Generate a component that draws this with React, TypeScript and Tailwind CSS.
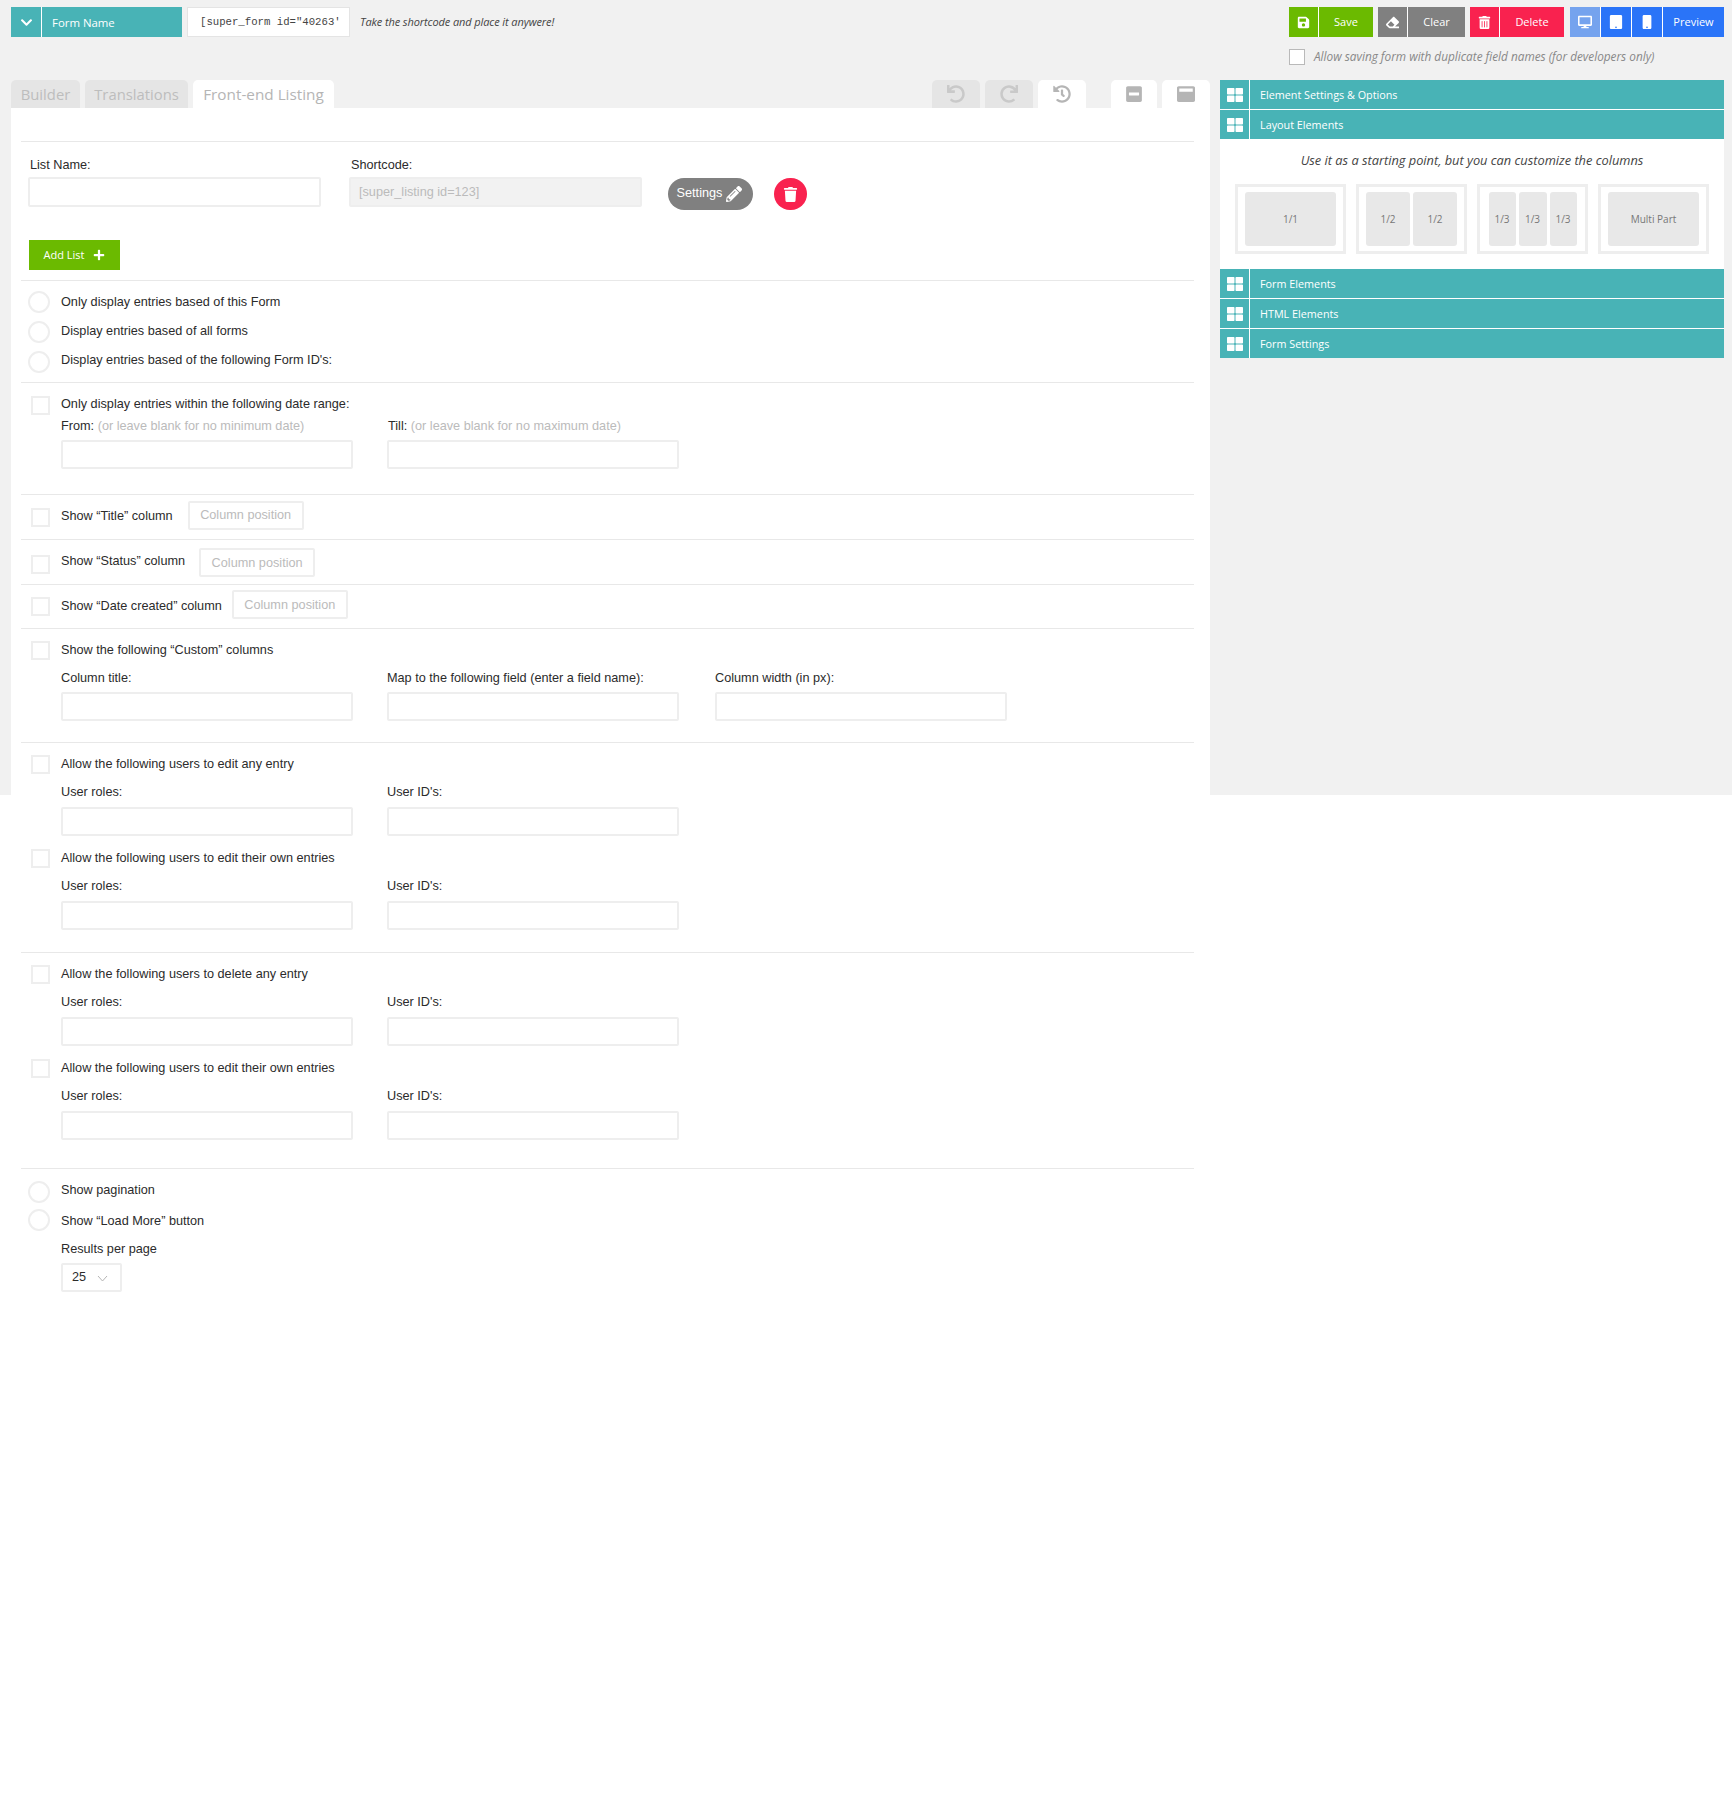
import { ReactNode } from "react";
import {
  FaChevronDown,
  FaDesktop,
  FaEraser,
  FaHistory,
  FaMinusSquare,
  FaMobile,
  FaPencilAlt,
  FaPlus,
  FaRedo,
  FaSave,
  FaTablet,
  FaThLarge,
  FaTrash,
  FaTrashAlt,
  FaUndo,
  FaWindowMaximize,
} from "react-icons/fa";

const uiFont = "font-['Open_Sans',sans-serif]";

function ActionButton({
  icon,
  label,
  color,
  labelWidth,
}: {
  icon: ReactNode;
  label: string;
  color: string;
  labelWidth: string;
}) {
  return (
    <div className={`flex h-[30px] text-white ${color}`}>
      <div className="flex w-[30px] items-center justify-center border-r border-white text-[13px]">{icon}</div>
      <div className={`flex items-center justify-center pt-[1px] text-[11px] ${labelWidth}`}>{label}</div>
    </div>
  );
}

function TopBar() {
  return (
    <header className={`flex h-[80px] justify-between pl-[11px] pr-[8px] pt-[7px] ${uiFont}`}>
      <div className="flex h-[30px] items-center">
        <div className="flex h-full w-[31px] items-center justify-center border-r border-white bg-[#48b3b6] text-[13px] text-white">
          <FaChevronDown />
        </div>
        <div className="flex h-full w-[140px] items-center bg-[#48b3b6] pl-[10px] pt-[1px] text-[11.4px] text-white">Form Name</div>
        <div className="ml-[5px] flex h-full w-[163px] items-center overflow-hidden whitespace-nowrap border border-[#e4e4e4] bg-white pl-[12px] pr-[9px] font-['Liberation_Mono',monospace] text-[10.67px] text-[#444]">
          <span className="block w-full overflow-hidden">[super_form id="40263'</span>
        </div>
        <span className="ml-[10px] pt-[1px] text-[11px] italic tracking-[-0.1px] text-[#444]">Take the shortcode and place it anywere!</span>
      </div>
      <div>
        <div className="flex">
          <ActionButton icon={<FaSave />} label="Save" color="bg-[#6bba00]" labelWidth="w-[54px]" />
          <div className="ml-[5px]">
            <ActionButton icon={<FaEraser />} label="Clear" color="bg-[#808080]" labelWidth="w-[57px]" />
          </div>
          <div className="ml-[5px]">
            <ActionButton icon={<FaTrashAlt />} label="Delete" color="bg-[#f9224f]" labelWidth="w-[64px]" />
          </div>
          <div className="ml-[6px] flex h-[30px] text-white">
            <div className="flex w-[31px] items-center justify-center border-r border-white bg-[#75a3ee] text-[14px]">
              <FaDesktop />
            </div>
            <div className="flex w-[31px] items-center justify-center border-r border-white bg-[#2a74f8] text-[14px]">
              <FaTablet />
            </div>
            <div className="flex w-[31px] items-center justify-center border-r border-white bg-[#2a74f8] text-[14px]">
              <FaMobile />
            </div>
            <div className="flex w-[61px] items-center justify-center bg-[#2a74f8] pt-[1px] text-[11px]">Preview</div>
          </div>
        </div>
        <div className="mt-[11px] flex items-center">
          <div className="h-[16px] w-[16px] border border-[#b9b9b9] bg-white" />
          <span className="ml-[9px] text-[11.8px] italic text-[#888]">Allow saving form with duplicate field names (for developers only)</span>
        </div>
      </div>
    </header>
  );
}

function Tab({ label, active, className }: { label: string; active?: boolean; className: string }) {
  return (
    <div
      className={`flex h-[28px] items-center justify-center rounded-t-[5px] pt-[1px] ${uiFont} ${
        active ? "bg-white text-[15.3px] text-[#b5b5b5]" : "bg-[#e5e5e5] text-[14.8px] text-[#bdbdbd]"
      } ${className}`}
    >
      {label}
    </div>
  );
}

function ToolTab({ icon, active, className }: { icon: ReactNode; active?: boolean; className: string }) {
  return (
    <div
      className={`flex h-[28px] items-center justify-center rounded-t-[5px] text-[18px] ${
        active ? "bg-white text-[#b5b5b5]" : "bg-[#e5e5e5] text-[#c9c9c9]"
      } ${className}`}
    >
      {icon}
    </div>
  );
}

function TabBar() {
  return (
    <div className="flex h-[28px]">
      <Tab label="Builder" className="w-[69px]" />
      <Tab label="Translations" className="ml-[5px] w-[103px]" />
      <Tab label="Front-end Listing" active className="ml-[5px] w-[141px]" />
      <ToolTab icon={<FaUndo />} className="ml-auto w-[48px]" />
      <ToolTab icon={<FaRedo />} className="ml-[5px] w-[48px]" />
      <ToolTab icon={<FaHistory />} active className="ml-[5px] w-[48px]" />
      <ToolTab icon={<FaMinusSquare />} active className="ml-[25px] w-[46px]" />
      <ToolTab icon={<FaWindowMaximize />} active className="ml-[5px] w-[48px]" />
    </div>
  );
}

function TextInput({ className = "", disabled, placeholder }: { className?: string; disabled?: boolean; placeholder?: string }) {
  return (
    <div
      className={`flex h-[29px] w-[292px] shrink-0 items-center rounded-[2px] border-2 border-[#eeeeee] px-[7px] pt-[1px] text-[#bbbbbb] ${
        disabled ? "bg-[#f2f2f2]" : "bg-white"
      } ${className}`}
    >
      {placeholder}
    </div>
  );
}

function Radio({ label, className = "", labelClass = "" }: { label: string; className?: string; labelClass?: string }) {
  return (
    <div className={`flex items-center pl-[7px] ${className}`}>
      <div className="h-[22px] w-[22px] rounded-full border-2 border-[#eeeeee] bg-white" />
      <span className={`ml-[11px] leading-[16px] ${labelClass}`}>{label}</span>
    </div>
  );
}

function Check({
  children,
  className = "",
  labelClass = "mb-[1px]",
}: {
  children: ReactNode;
  className?: string;
  labelClass?: string;
}) {
  return (
    <div className={`flex items-center pl-[10px] ${className}`}>
      <div className="h-[19px] w-[19px] border-2 border-[#eeeeee] bg-white" />
      <span className={`ml-[11px] leading-[16px] ${labelClass}`}>{children}</span>
    </div>
  );
}

function ColumnRow({
  label,
  sectionClass,
  boxClass,
  labelClass = "",
}: {
  label: string;
  sectionClass: string;
  boxClass: string;
  labelClass?: string;
}) {
  return (
    <section className={`border-b border-[#e8e8e8] ${sectionClass}`}>
      <div className="flex h-[29px] items-center pl-[10px]">
        <div className="mt-[4px] h-[19px] w-[19px] border-2 border-[#eeeeee] bg-white" />
        <span className={`ml-[11px] leading-[16px] ${labelClass}`}>{label}</span>
        <div className={`flex h-[29px] w-[116px] items-center justify-center rounded-[2px] border-2 border-[#eeeeee] text-[#bbbbbb] ${boxClass}`}>
          Column position
        </div>
      </div>
    </section>
  );
}

function UserFields() {
  return (
    <div className="mt-[10px] flex gap-[34px] pl-[40px]">
      <div>
        <div className="h-[16px] leading-[16px]">User roles:</div>
        <TextInput className="mt-[7px]" />
      </div>
      <div>
        <div className="h-[16px] leading-[16px]">User ID's:</div>
        <TextInput className="mt-[7px]" />
      </div>
    </div>
  );
}

function ListingForm() {
  return (
    <main className="ml-[10px] mr-[16px] bg-white font-['Liberation_Sans',Arial,sans-serif] text-[12.7px] text-[#2b2b2b]">
      <div className="h-[34px] border-b border-[#e8e8e8]" />

      <section className="h-[139px] border-b border-[#e8e8e8] pl-[7px] pt-[15px]">
        <div className="flex items-start">
          <div className="w-[293px]">
            <div className="h-[16px] pl-[2px] leading-[16px]">List Name:</div>
            <TextInput className="mt-[4px] h-[30px] w-[293px]" />
          </div>
          <div className="ml-[28px] w-[293px]">
            <div className="h-[16px] pl-[2px] leading-[16px]">Shortcode:</div>
            <TextInput disabled placeholder="[super_listing id=123]" className="mt-[4px] h-[30px] w-[293px] pl-[8px]" />
          </div>
          <div className="ml-[26px] mt-[21px] flex h-[32px] w-[85px] items-center justify-center gap-[4px] rounded-full bg-[#808080] text-white">
            <span className="-ml-[2px]">Settings</span>
            <FaPencilAlt className="text-[16px]" />
          </div>
          <div className="ml-[21px] mt-[21px] flex h-[32px] w-[33px] items-center justify-center rounded-full bg-[#f9224f] text-[15px] text-white">
            <FaTrash />
          </div>
        </div>
        <div className={`ml-[1px] mt-[30px] flex h-[30px] w-[91px] items-center justify-center gap-[9px] bg-[#6bba00] text-[11px] text-white ${uiFont}`}>
          <span>Add List</span>
          <FaPlus className="text-[12px]" />
        </div>
      </section>

      <section className="h-[102px] border-b border-[#e8e8e8] pt-[10px]">
        <Radio label="Only display entries based of this Form" />
        <Radio label="Display entries based of all forms" className="mt-[8px]" labelClass="mb-[2px]" />
        <Radio label="Display entries based of the following Form ID's:" className="mt-[8px]" labelClass="mb-[4px]" />
      </section>

      <section className="h-[112px] border-b border-[#e8e8e8] pt-[13px]">
        <Check labelClass="mb-[3px]">Only display entries within the following date range:</Check>
        <div className="mt-[3px] flex gap-[34px] pl-[40px]">
          <div>
            <div className="h-[16px] leading-[16px]">
              From: <span className="text-[#bbbbbb]">(or leave blank for no minimum date)</span>
            </div>
            <TextInput className="mt-[6px]" />
          </div>
          <div>
            <div className="h-[16px] pl-[1px] leading-[16px]">
              Till: <span className="text-[#bbbbbb]">(or leave blank for no maximum date)</span>
            </div>
            <TextInput className="mt-[6px]" />
          </div>
        </div>
      </section>

      <ColumnRow label="Show “Title” column" sectionClass="h-[45px] pt-[6px]" boxClass="ml-[15px] pt-[1px]" />
      <ColumnRow label="Show “Status” column" sectionClass="h-[45px] pt-[8px]" boxClass="ml-[14px] pt-[2px]" labelClass="mb-[3px]" />
      <ColumnRow label="Show “Date created” column" sectionClass="h-[44px] pt-[5px]" boxClass="ml-[10px] pt-[3px]" labelClass="mt-[3px]" />

      <section className="h-[114px] border-b border-[#e8e8e8] pt-[12px]">
        <Check>Show the following “Custom” columns</Check>
        <div className="mt-[10px] flex gap-[34px] pl-[40px]">
          <div>
            <div className="h-[16px] leading-[16px]">Column title:</div>
            <TextInput className="mt-[6px]" />
          </div>
          <div>
            <div className="h-[16px] leading-[16px]">Map to the following field (enter a field name):</div>
            <TextInput className="mt-[6px]" />
          </div>
          <div className="ml-[2px]">
            <div className="h-[16px] leading-[16px]">Column width (in px):</div>
            <TextInput className="mt-[6px]" />
          </div>
        </div>
      </section>

      <section className="h-[210px] border-b border-[#e8e8e8] pt-[12px]">
        <Check>Allow the following users to edit any entry</Check>
        <UserFields />
        <Check className="mt-[13px]">Allow the following users to edit their own entries</Check>
        <UserFields />
      </section>

      <section className="h-[216px] border-b border-[#e8e8e8] pt-[12px]">
        <Check>Allow the following users to delete any entry</Check>
        <UserFields />
        <Check className="mt-[13px]">Allow the following users to edit their own entries</Check>
        <UserFields />
      </section>

      <section className="pt-[12px]">
        <Radio label="Show pagination" labelClass="mb-[4px]" />
        <Radio label="Show “Load More” button" className="mt-[6px]" labelClass="mt-[2px]" />
        <div className="pl-[40px]">
          <div className="mt-[10px] h-[16px] leading-[16px]">Results per page</div>
          <div className="mt-[6px] flex h-[29px] w-[61px] items-center rounded-[2px] border-2 border-[#eeeeee] pl-[9px] pt-[1px]">
            25
            <svg className="ml-[11px]" width="11" height="7" viewBox="0 0 11 7" fill="none" stroke="#b5b5b5" strokeWidth="1">
              <path d="M1 1l4.5 5L10 1" />
            </svg>
          </div>
        </div>
      </section>
    </main>
  );
}

function PanelHeader({ label }: { label: string }) {
  return (
    <div className={`flex h-[30px] border-b border-white bg-[#48b3b6] text-[10.8px] text-white ${uiFont}`}>
      <div className="flex w-[30px] items-center justify-center border-r border-white text-[16px]">
        <FaThLarge />
      </div>
      <div className="flex items-center pl-[10px] pt-[1px]">{label}</div>
    </div>
  );
}

function LayoutCard({ parts }: { parts: { label: string; width: string }[] }) {
  return (
    <div className="flex h-[70px] w-[111px] justify-center gap-[3px] border-[3px] border-[#eeeeee] bg-white px-[7px] py-[5px]">
      {parts.map((part, i) => (
        <div key={i} className={`flex items-center justify-center rounded-[3px] bg-[#e8e8e8] text-[10px] text-[#777] ${part.width}`}>
          {part.label}
        </div>
      ))}
    </div>
  );
}

function Sidebar() {
  return (
    <aside className={`w-[504px] ${uiFont}`}>
      <PanelHeader label="Element Settings & Options" />
      <PanelHeader label="Layout Elements" />
      <div className="-mt-px h-[130px] bg-white pl-[15px] pr-[15px] pt-[13px]">
        <p className="text-center text-[12.8px] italic leading-[16px] text-[#444]">Use it as a starting point, but you can customize the columns</p>
        <div className="mt-[16px] flex justify-between">
          <LayoutCard parts={[{ label: "1/1", width: "w-[91px]" }]} />
          <LayoutCard
            parts={[
              { label: "1/2", width: "w-[44px]" },
              { label: "1/2", width: "w-[44px]" },
            ]}
          />
          <LayoutCard
            parts={[
              { label: "1/3", width: "w-[27px]" },
              { label: "1/3", width: "w-[28px]" },
              { label: "1/3", width: "w-[27px]" },
            ]}
          />
          <LayoutCard parts={[{ label: "Multi Part", width: "w-[91px]" }]} />
        </div>
      </div>
      <PanelHeader label="Form Elements" />
      <PanelHeader label="HTML Elements" />
      <div className="h-[29px] overflow-hidden">
        <PanelHeader label="Form Settings" />
      </div>
    </aside>
  );
}

export default function App() {
  return (
    <div className="min-h-[1795px] bg-white">
      <div className="h-[795px] bg-[#f1f1f1]">
        <TopBar />
        <div className="flex items-start pl-[11px] pr-[8px]">
          <div className="w-[1199px]">
            <TabBar />
            <div className="bg-white">
              <ListingForm />
            </div>
          </div>
          <div className="ml-[10px]">
            <Sidebar />
          </div>
        </div>
      </div>
    </div>
  );
}
